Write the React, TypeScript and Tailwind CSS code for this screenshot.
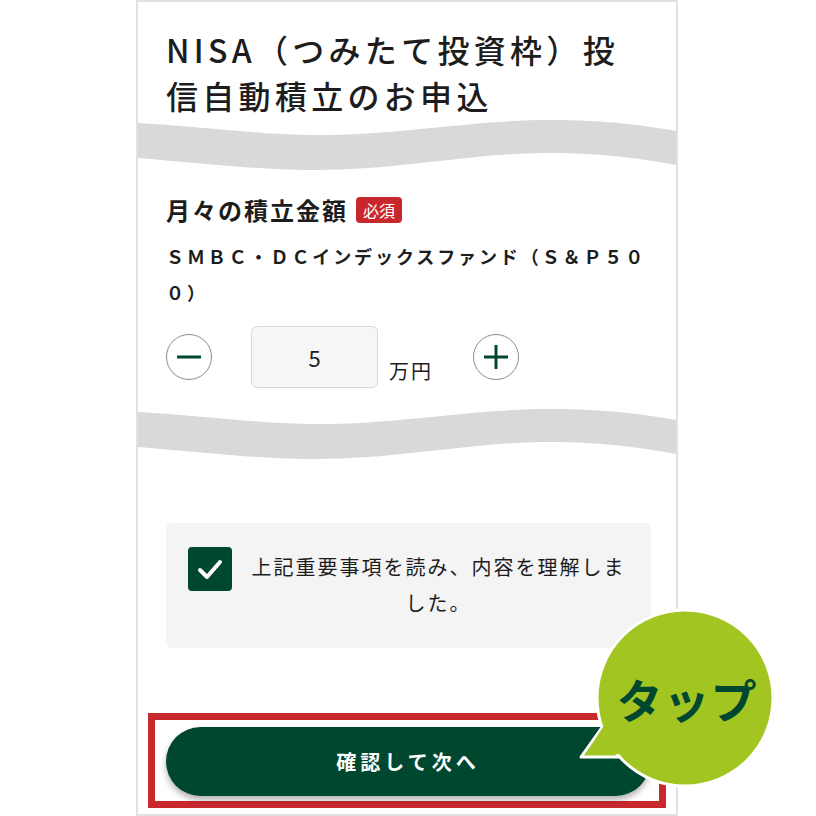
import React from 'react';

function Wave({ className }: { className?: string }) {
  return (
    <svg
      className={`block h-[55px] w-full ${className ?? ''}`}
      viewBox="0 0 538 55"
      preserveAspectRatio="none"
    >
      <path
        d="M0 5 C60 8 110 16 170 17 C260 18 330 2 412 2 C470 2 510 8 538 13 L538 47 C510 42 470 35 412 35 C330 35 260 53 170 52 C110 51 60 45 0 40 Z"
        fill="#d9d9d9"
      />
    </svg>
  );
}

function RoundButton({ plus }: { plus?: boolean }) {
  return (
    <button className="flex h-[46px] w-[46px] shrink-0 items-center justify-center rounded-full border-[1.5px] border-[#8c8c8c] bg-white">
      <svg width="26" height="26" viewBox="0 0 26 26">
        <line x1="1" y1="13" x2="25" y2="13" stroke="#004730" strokeWidth="3" />
        {plus && <line x1="13" y1="1" x2="13" y2="25" stroke="#004730" strokeWidth="3" />}
      </svg>
    </button>
  );
}

export default function App() {
  return (
    <div className="relative h-[816px] w-[816px] overflow-hidden bg-white font-['Noto_Sans_CJK_JP','Noto_Sans',sans-serif] text-[#1d1d1d]">
      {/* phone screen */}
      <div className="ml-[136px] h-[816px] w-[542px] border-2 border-[#dfe3e3] bg-white">
        <h1 className="pl-[28px] pt-[24px] text-[32px] font-medium leading-[46px] tracking-[4.3px]">
          NISA（つみたて投資枠）投
          <br />
          信自動積立のお申込
        </h1>

        <Wave />

        <div className="pl-[28px] pr-[25px]">
          <div className="mt-[19px] flex h-[36px] items-center">
            <span className="text-[24px] font-bold tracking-[2px]">月々の積立金額</span>
            <span className="ml-[8px] h-[26px] rounded-[4px] bg-[#c8282c] px-[7px] text-[16px] leading-[26px] text-white">
              必須
            </span>
          </div>

          <p className="mt-[10px] whitespace-nowrap text-[18px] font-bold leading-[36px] tracking-[2.9px]">
            ＳＭＢＣ・ＤＣインデックスファンド（Ｓ＆Ｐ５０
            <br />
            ０）
          </p>

          <div className="mt-[16px] flex h-[62px] items-center">
            <RoundButton />
            <div className="ml-[39px] flex h-[62px] w-[127px] items-center justify-center rounded-[6px] border border-[#d9d9d9] bg-[#f6f6f6] text-[22px]">
              5
            </div>
            <span className="mb-[5px] ml-[11px] self-end text-[20px] leading-[24px] tracking-[2px]">万円</span>
            <div className="ml-[40px]">
              <RoundButton plus />
            </div>
          </div>
        </div>

        <Wave className="mt-[19px]" />

        <div className="pl-[28px] pr-[25px]">
          <div className="mt-[61px] flex rounded-[6px] bg-[#f4f4f4] pb-[27px] pl-[22px] pr-[20px] pt-[26px]">
            <div className="-mt-[2px] flex h-[44px] w-[44px] shrink-0 items-center justify-center rounded-[4px] bg-[#004730]">
              <svg width="26" height="26" viewBox="0 0 26 26" fill="none">
                <path d="M3 14 L10 21 L23 6" stroke="white" strokeWidth="4" strokeLinecap="round" strokeLinejoin="round" />
              </svg>
            </div>
            <p className="ml-[14px] flex-1 text-center text-[20px] leading-[36px] tracking-[2px]">
              上記重要事項を読み、内容を理解しま
              <br />
              した。
            </p>
          </div>
        </div>

        <div className="mx-[10px] mt-[65px] border-[7px] border-[#c9282d] pb-[5px] pl-[11px] pr-[9px] pt-[7px]">
          <button className="flex h-[69px] w-full items-center justify-center rounded-full bg-[#004730] text-[20px] font-bold tracking-[4px] text-white shadow-[0_4px_6px_rgba(0,0,0,0.3)]">
            確認して次へ
          </button>
        </div>
      </div>

      {/* tap bubble */}
      <div className="absolute left-[570px] top-[600px] h-[200px] w-[220px]">
        <svg className="absolute inset-0" width="220" height="200" viewBox="0 0 220 200">
          <polygon points="33,126 11,157 54,157" fill="#a2c522" stroke="white" strokeWidth="3" strokeLinejoin="round" />
          <circle cx="115" cy="98" r="88" fill="#a2c522" stroke="white" strokeWidth="3" />
          <polygon points="35,124 15,155 52,154 60,140" fill="#a2c522" />
        </svg>
        <div className="absolute left-[29px] top-[10px] flex h-[176px] w-[176px] items-center justify-center text-[46px] font-bold tracking-[1px] text-[#004730]">
          タップ
        </div>
      </div>
    </div>
  );
}
